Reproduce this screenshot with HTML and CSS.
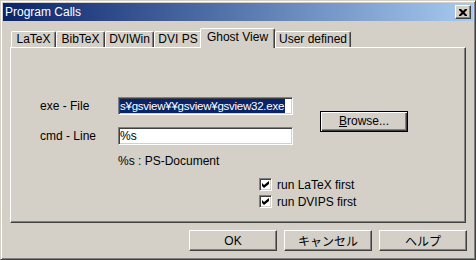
FILE: index.html
```html
<!DOCTYPE html>
<html lang="ja">
<head>
    <meta charset="UTF-8">
    <title>Program Calls</title>
    <link rel="stylesheet" href="styles.css">
</head>
<body>
    <div class="window">
        <div class="titlebar">
            <span class="title">Program Calls</span>
            <span class="close">
                <svg width="8" height="7" viewBox="0 0 8 7">
                    <path d="M0 0h2l2 2 2-2h2v1l-2.5 2.5 2.5 2.5v1h-2l-2-2-2 2h-2v-1l2.5-2.5-2.5-2.5z" fill="#000"/>
                </svg>
            </span>
        </div>

        <div class="content">
            <div class="tabs">
                <div class="tab">LaTeX</div>
                <div class="tab">BibTeX</div>
                <div class="tab">DVIWin</div>
                <div class="tab">DVI PS</div>
                <div class="tab active">Ghost View</div>
                <div class="tab">User defined</div>
            </div>

            <div class="panel">
                <div class="form">
                    <span class="label">exe - File</span>
                    <div class="field"><span class="sel">s¥gsview¥¥gsview¥gsview32.exe</span></div>
                    <button class="btn btn-default browse"><u>B</u>rowse...</button>
                    <span class="label">cmd - Line</span>
                    <div class="field">%s</div>
                    <span class="note">%s : PS-Document</span>
                </div>

                <div class="checks">
                    <div class="check">
                        <span class="box">
                            <svg width="7" height="7" viewBox="0 0 7 7"><path d="M0 2l2 2 5-4v3l-5 4-2-2z" fill="#000"/></svg>
                        </span>
                        run LaTeX first
                    </div>
                    <div class="check">
                        <span class="box">
                            <svg width="7" height="7" viewBox="0 0 7 7"><path d="M0 2l2 2 5-4v3l-5 4-2-2z" fill="#000"/></svg>
                        </span>
                        run DVIPS first
                    </div>
                </div>
            </div>

            <div class="actions">
                <button class="btn">OK</button>
                <button class="btn">キャンセル</button>
                <button class="btn">ヘルプ</button>
            </div>
        </div>
    </div>
</body>
</html>
```

FILE: styles.css
```css
/* base */
body {
    margin: 0;
    font-family: "Liberation Sans", "Noto Sans CJK JP", sans-serif;
    font-size: 12px;
    color: #000000;
    background-color: #d4d0c8;
}

/* window frame */
.window {
    width: 476px;
    height: 260px;
    box-sizing: border-box;
    border: 1px solid;
    border-color: #d4d0c8 #404040 #404040 #d4d0c8;
    box-shadow: inset 1px 1px #ffffff, inset -1px -1px #808080;
    padding: 2px;
    display: flex;
    flex-direction: column;
    background-color: #d4d0c8;
}

.titlebar {
    height: 18px;
    display: flex;
    align-items: center;
    justify-content: space-between;
    padding: 0 2px;
    background: linear-gradient(to right, #0a246a, #a6caf0);
    color: #ffffff;
}

.close {
    width: 16px;
    height: 14px;
    box-sizing: border-box;
    display: flex;
    align-items: center;
    justify-content: center;
    background-color: #d4d0c8;
    border: 1px solid;
    border-color: #ffffff #404040 #404040 #ffffff;
    box-shadow: inset -1px -1px #808080;
}

.content {
    padding: 7px 7px 0;
}

/* tabs */
.tabs {
    height: 19px;
    display: flex;
    align-items: flex-end;
    padding-left: 1px;
}

.tab {
    height: 16px;
    box-sizing: border-box;
    border: 1px solid;
    border-bottom: none;
    border-color: #ffffff #404040 #ffffff #ffffff;
    border-radius: 2px 2px 0 0;
    box-shadow: inset -1px 0 #808080;
    text-align: center;
    line-height: 14px;
    background-color: #d4d0c8;
}

.tab:nth-child(1) { width: 45px; }
.tab:nth-child(2) { width: 49px; }
.tab:nth-child(3) { width: 49px; }
.tab:nth-child(4) { width: 48px; }
.tab:nth-child(6) { width: 76px; }

.tab.active {
    width: 75px;
    height: 20px;
    margin: 0 0 -1px -2px;
    line-height: 17px;
    position: relative;
    z-index: 1;
}

/* panel */
.panel {
    height: 176px;
    box-sizing: border-box;
    border: 1px solid;
    border-color: #ffffff #404040 #404040 #ffffff;
    box-shadow: inset -1px -1px #808080;
    padding: 49px 0 0 29px;
}

.form {
    display: grid;
    grid-template-columns: 78px 175px 111px;
    grid-template-rows: 18px 18px auto;
    row-gap: 12px;
    align-items: center;
}

.field {
    height: 18px;
    box-sizing: border-box;
    border: 1px solid;
    border-color: #808080 #ffffff #ffffff #808080;
    box-shadow: inset 1px 1px #404040, inset -1px -1px #d4d0c8;
    background-color: #ffffff;
    padding: 1px;
    line-height: 14px;
    white-space: nowrap;
    overflow: hidden;
}

.sel {
    display: inline-block;
    background-color: #0a246a;
    color: #ffffff;
    font-size: 11.5px;
    letter-spacing: -0.25px;
    padding-right: 1px;
}

.note {
    grid-column: 2;
    line-height: 12px;
    margin-top: -2px;
}

.browse {
    grid-column: 3;
    grid-row: 1 / span 2;
    width: 111px;
    height: 22px;
    margin-left: 27px;
}

/* buttons */
.btn {
    width: 88px;
    height: 21px;
    padding: 0;
    font: inherit;
    color: #000000;
    background-color: #d4d0c8;
    border: 1px solid;
    border-color: #ffffff #404040 #404040 #ffffff;
    box-shadow: inset -1px -1px #808080, inset 1px 1px #d4d0c8;
}

.btn-default {
    border-color: #000000;
    box-shadow: inset 1px 1px #ffffff, inset -1px -1px #404040, inset -2px -2px #808080;
}

/* checkboxes */
.checks {
    margin-top: 9px;
    padding-left: 219px;
    display: flex;
    flex-direction: column;
}

.check {
    height: 17px;
    display: flex;
    align-items: center;
    gap: 5px;
}

.box {
    width: 13px;
    height: 13px;
    box-sizing: border-box;
    border: 1px solid;
    border-color: #808080 #ffffff #ffffff #808080;
    box-shadow: inset 1px 1px #404040, inset -1px -1px #d4d0c8;
    background-color: #ffffff;
    display: flex;
    align-items: center;
    justify-content: center;
}

/* dialog buttons */
.actions {
    display: flex;
    justify-content: flex-end;
    gap: 7px;
    margin: 7px -1px 0 0;
}
```
